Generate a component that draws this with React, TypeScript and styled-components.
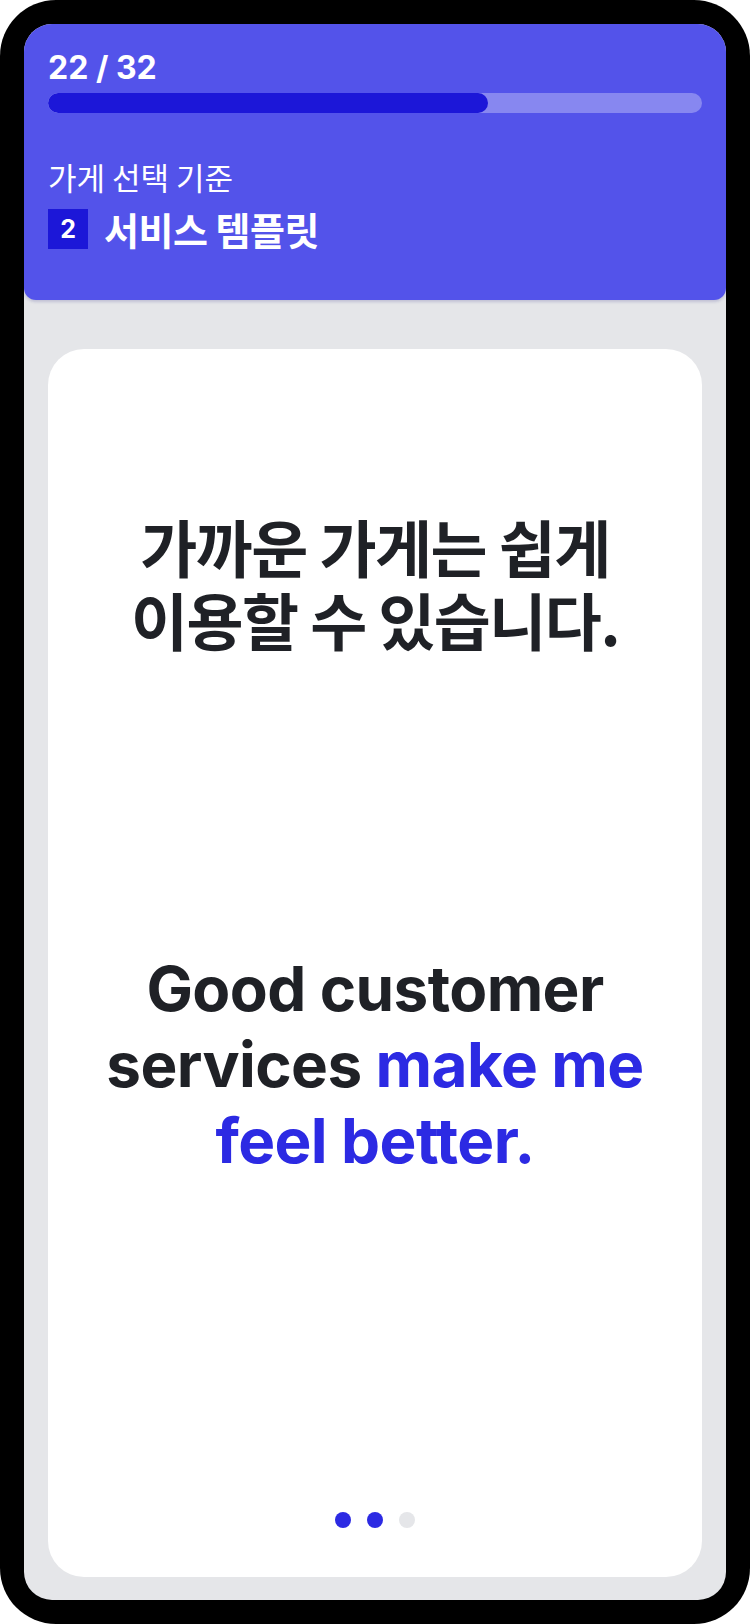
import styled, { createGlobalStyle } from 'styled-components';

const GlobalStyle = createGlobalStyle`
  html, body {
    margin: 0;
    padding: 0;
    background: #ffffff;
  }
  * {
    box-sizing: border-box;
  }
  body {
    font-family: Inter, "Noto Sans CJK KR", sans-serif;
  }
`;

const Frame = styled.div`
  width: 750px;
  height: 1624px;
  background: #000000;
  border-radius: 56px;
  padding: 24px;
`;

const Screen = styled.div`
  height: 100%;
  display: flex;
  flex-direction: column;
  background: #e5e6e9;
  border-radius: 28px;
  overflow: hidden;
`;

const Header = styled.header`
  background: #5353ea;
  padding: 26px 24px 51px;
  border-radius: 0 0 12px 12px;
  box-shadow: 0 2px 3px rgba(30, 30, 120, 0.18);
  color: #ffffff;
`;

const Counter = styled.div`
  font-family: Inter, sans-serif;
  font-size: 32px;
  line-height: 36px;
  font-weight: 700;
`;

const Track = styled.div`
  margin-top: 7px;
  height: 20px;
  border-radius: 10px;
  background: rgba(255, 255, 255, 0.3);
  overflow: hidden;
`;

const Fill = styled.div`
  height: 100%;
  border-radius: 10px;
  background: #1c17d8;
`;

const Category = styled.div`
  margin-top: 46px;
  font-family: "Noto Sans CJK KR", sans-serif;
  font-size: 31px;
  line-height: 36px;
  font-weight: 400;
`;

const TitleRow = styled.div`
  margin-top: 14px;
  display: flex;
  align-items: center;
  gap: 16px;
`;

const Badge = styled.span`
  width: 40px;
  height: 40px;
  display: flex;
  align-items: center;
  justify-content: center;
  background: #1c17d8;
  font-family: Inter, sans-serif;
  font-size: 25px;
  font-weight: 700;
`;

const Title = styled.h1`
  margin: 0;
  font-family: "Noto Sans CJK KR", sans-serif;
  font-size: 38px;
  line-height: 40px;
  font-weight: 700;
  letter-spacing: -0.5px;
`;

const Body = styled.main`
  flex: 1;
  display: flex;
  padding: 49px 24px 23px;
`;

const Card = styled.section`
  flex: 1;
  display: flex;
  flex-direction: column;
  align-items: center;
  background: #ffffff;
  border-radius: 36px;
  padding: 161px 30px 49px;
  text-align: center;
`;

const KoreanLine = styled.p`
  margin: 0;
  max-width: 520px;
  font-family: "Noto Sans CJK KR", sans-serif;
  font-size: 62px;
  line-height: 73px;
  font-weight: 700;
  letter-spacing: -1.5px;
  color: #1f2126;
  word-break: keep-all;
`;

const EnglishLine = styled.p`
  margin: 295px 0 0;
  font-family: Inter, sans-serif;
  font-size: 62px;
  line-height: 76px;
  font-weight: 700;
  letter-spacing: -0.6px;
  color: #1f2126;
`;

const Accent = styled.span`
  color: #2c2ae3;
`;

const Dots = styled.div`
  margin-top: auto;
  display: flex;
  gap: 16px;
`;

const Dot = styled.span<{ $active: boolean }>`
  width: 16px;
  height: 16px;
  border-radius: 50%;
  background: ${(p) => (p.$active ? '#2c2ae3' : '#e5e6e9')};
`;

const current = 22;
const total = 32;
const progress = 67.3;

export default function App() {
  return (
    <>
      <GlobalStyle />
      <Frame>
        <Screen>
          <Header>
            <Counter>
              {current} / {total}
            </Counter>
            <Track>
              <Fill style={{ width: `${progress}%` }} />
            </Track>
            <Category>가게 선택 기준</Category>
            <TitleRow>
              <Badge>2</Badge>
              <Title>서비스 템플릿</Title>
            </TitleRow>
          </Header>
          <Body>
            <Card>
              <KoreanLine>가까운 가게는 쉽게 이용할 수 있습니다.</KoreanLine>
              <EnglishLine>
                Good customer services <Accent>make me feel better.</Accent>
              </EnglishLine>
              <Dots>
                {[true, true, false].map((on, i) => (
                  <Dot key={i} $active={on} />
                ))}
              </Dots>
            </Card>
          </Body>
        </Screen>
      </Frame>
    </>
  );
}
